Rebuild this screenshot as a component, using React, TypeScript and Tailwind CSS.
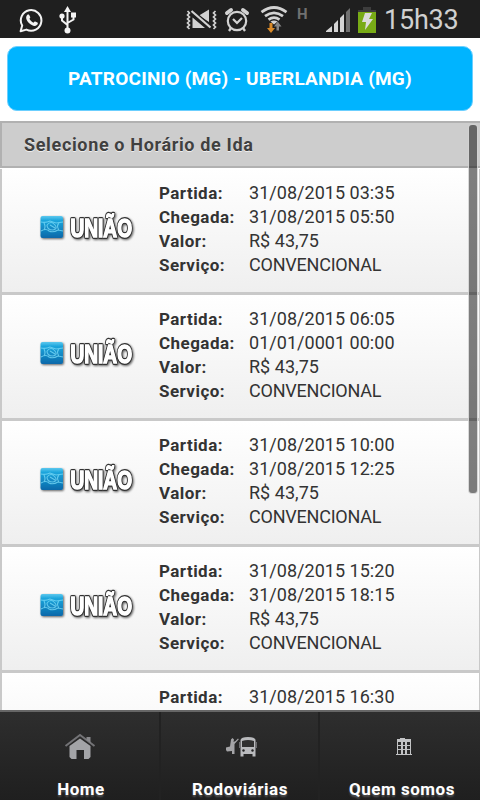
import React from "react";

type Trip = { partida: string; chegada: string };

const trips: Trip[] = [
  { partida: "31/08/2015 03:35", chegada: "31/08/2015 05:50" },
  { partida: "31/08/2015 06:05", chegada: "01/01/0001 00:00" },
  { partida: "31/08/2015 10:00", chegada: "31/08/2015 12:25" },
  { partida: "31/08/2015 15:20", chegada: "31/08/2015 18:15" },
];

function WhatsAppIcon() {
  return (
    <svg className="ml-[19px] shrink-0" width="25" height="25" viewBox="0 0 25 25" fill="none">
      <path d="M1.6 23.2 3.2 17.6A10.3 10.3 0 1 1 7.4 21.6Z" stroke="#f2f2f2" strokeWidth="2" strokeLinejoin="round" />
      <path d="M8.8 6.6c.5-.3 1.1-.2 1.4.3l1 2.1c.2.5 0 .9-.8 1.8.9 1.9 2.3 3.1 4.1 3.9.8-1 1.2-1.4 1.7-1.2l2.2 1.1c.6.3.5.9.3 1.5-.5 1.2-1.8 1.9-3 1.8-4-.4-7.7-4-8.5-7.7-.2-1.4.6-3 1.6-3.6Z" fill="#f2f2f2" />
    </svg>
  );
}

function UsbIcon() {
  return (
    <svg className="ml-[15px] shrink-0" width="18" height="28" viewBox="0 0 18 28" fill="none" stroke="#f4f4f4" strokeWidth="2">
      <path d="M8.5 5V24M3 11v3.5l5.5 4.5M14.500 9v4.500L8.500 17" />
      <path d="M8.5 0 12 6H5Z" fill="#f4f4f4" stroke="none" />
      <circle cx="8.5" cy="24.5" r="3" fill="#f4f4f4" stroke="none" />
      <circle cx="3" cy="10" r="2.6" fill="#f4f4f4" stroke="none" />
      <path d="M12 6.5h5v5h-5Z" fill="#f4f4f4" stroke="none" />
    </svg>
  );
}

function MuteIcon() {
  return (
    <svg className="ml-[108px] shrink-0" width="33" height="24" viewBox="0 0 33 24" fill="none">
      <path d="M2.5 3l2 2-2 2 2 2-2 2 2 2-2 2 2 2-2 2 2 2" stroke="#d2d2d2" strokeWidth="1.7" />
      <path d="M30.5 3l-2 2 2 2-2 2 2 2-2 2 2 2-2 2 2 2-2 2" stroke="#d2d2d2" strokeWidth="1.7" />
      <path d="M24 1.500V14L14 7.500ZM7.500 9.500 20 20H7.500Z" fill="#d2d2d2" />
      <path d="M6.500 3 25.500 19.500" stroke="#1f1f1f" strokeWidth="4.400" />
      <path d="M6.500 3 25.500 19.500" stroke="#d2d2d2" strokeWidth="2.200" />
    </svg>
  );
}

function AlarmIcon() {
  return (
    <svg className="ml-[6px] shrink-0" width="26" height="26" viewBox="0 0 26 26" fill="none" stroke="#d2d2d2">
      <circle cx="13" cy="14" r="9.2" strokeWidth="2.2" />
      <path d="M3 6 7 3M19 3l4 3" strokeWidth="4" strokeLinecap="round" />
      <path d="m7 21-2 3M19 21l2 3" strokeWidth="2.3" />
      <path d="m9 12 4 4 5-5" strokeWidth="2.2" />
    </svg>
  );
}

function WifiIcon() {
  return (
    <svg className="ml-[10px] shrink-0" width="28" height="28" viewBox="0 0 28 28" fill="none" stroke="#d2d2d2" strokeWidth="2.7">
      <path d="M1.5 6.2Q14-3.2 26.5 6.2M5 10.2Q14 3.5 23 10.2M8.5 13.6Q14 9.6 19.5 13.6" />
      <path d="m10.500 15.500q3.500-2 7 0L14 18.500Z" fill="#d2d2d2" stroke="none" />
      <path d="M9.500 17h3v5h2.500L11 27 7 22h2.500Z" fill="#d98a28" stroke="none" />
      <path d="M16.500 24.500v-4H14l3.700-5 3.800 5H19v4Z" fill="#858585" stroke="none" />
    </svg>
  );
}

function SignalIcon() {
  return (
    <svg className="ml-[17px] shrink-0" width="26" height="26" viewBox="0 0 26 26">
      <path d="M1 25v-1l6-5v6ZM9 25v-8l4-4v12ZM15 25V11l4-4v18Z" fill="#d4d4d4" />
      <path d="M21 25V5l4-4v24Z" fill="#707070" />
    </svg>
  );
}

function BatteryIcon() {
  return (
    <svg className="ml-[7px] shrink-0" width="18" height="26" viewBox="0 0 18 26">
      <path d="M5 0h8v3h5v3H0V3h5Z" fill="#3d3d3d" />
      <path d="M0 5h18v21H0Z" fill="#78ab16" />
      <path d="M7 6h7l-3 6h4L7 23l1-8H4Z" fill="#dcdcdc" />
    </svg>
  );
}

function StatusBar() {
  return (
    <header className="flex h-[38px] shrink-0 items-center bg-[#1f1f1f] pt-[2px]">
      <WhatsAppIcon />
      <UsbIcon />
      <MuteIcon />
      <AlarmIcon />
      <WifiIcon />
      <span className="mb-[13px] ml-[9px] w-[11px] text-[15px] leading-[18px] font-bold text-[#707070]">H</span>
      <SignalIcon />
      <BatteryIcon />
      <span className="ml-[8px] text-[27px] leading-[36px] tracking-[-0.2px] whitespace-nowrap text-[#d0d0d0]">15h33</span>
    </header>
  );
}

function UniaoLogo() {
  return (
    <svg className="ml-[37px] shrink-0 overflow-visible" width="98" height="36" viewBox="0 0 98 36">
      <defs>
        <linearGradient id="tile" x1="0" y1="0" x2="0" y2="1">
          <stop offset="0" stopColor="#5cc8ee" />
          <stop offset=".2" stopColor="#1ba5dc" />
          <stop offset="1" stopColor="#0968a9" />
        </linearGradient>
        <filter id="soft" x="-10%" y="-10%" width="120%" height="130%">
          <feDropShadow dx="1" dy="1" stdDeviation=".8" floodColor="#000" floodOpacity=".6" />
        </filter>
      </defs>
      <rect x="1.5" y="7" width="22.500" height="22" rx="2" fill="url(#tile)" filter="url(#soft)" />
      <path d="M2 13q5 1 9-1l6 2 7-1M2 22q5-3 8 0 4 2 9-1l5 1M5 14q2 4 0 7M20 14q-3 3 0 7M8 16q4-5 8 0 3 4-2 5-6 0-6-5M11 16l5 3" fill="none" stroke="#7edcf8" strokeWidth="1.1" opacity=".75" />
      <g filter="url(#soft)">
        <text
          x="31.5"
          y="27.5"
          fontSize="26"
          textLength="61.5"
          lengthAdjust="spacingAndGlyphs"
          fill="#fff"
          stroke="#333"
          strokeWidth="4"
          strokeLinejoin="round"
          paintOrder="stroke"
          className="font-['Liberation_Sans'] font-bold"
        >
          UNIÃO
        </text>
        <text
          x="31.5"
          y="27.5"
          fontSize="26"
          textLength="61.5"
          lengthAdjust="spacingAndGlyphs"
          fill="#fff"
          stroke="#fff"
          strokeWidth="1.5"
          aria-hidden="true"
          className="font-['Liberation_Sans'] font-bold"
        >
          UNIÃO
        </text>
      </g>
    </svg>
  );
}

function Field({ label, value, tight }: { label: string; value: string; tight?: boolean }) {
  return (
    <>
      <dt className="text-[17px] font-bold tracking-[0.45px] whitespace-nowrap">{label}</dt>
      <dd className={`text-[18px] whitespace-nowrap ${tight ? "tracking-[-0.22px]" : "tracking-[0.03px]"}`}>{value}</dd>
    </>
  );
}

const rowFrame = "flex shrink-0 border-r border-l-2 border-x-[#c9c9c9] bg-linear-to-b";
const fieldGrid = "grid auto-rows-[24px] grid-cols-[90px_1fr] content-start pt-[12px] leading-[24px] text-[#333]";

function TripRow({ trip }: { trip: Trip }) {
  return (
    <li className={`${rowFrame} h-[126px] border-b-[3px] border-b-[#c9c9c9] from-white to-[#efefef]`}>
      <div className="w-[157px] shrink-0 pt-[40px]">
        <UniaoLogo />
      </div>
      <dl className={fieldGrid}>
        <Field label="Partida:" value={trip.partida} />
        <Field label="Chegada:" value={trip.chegada} />
        <Field label="Valor:" value="R$ 43,75" />
        <Field label="Serviço:" value="CONVENCIONAL" tight />
      </dl>
    </li>
  );
}

function HomeIcon() {
  return (
    <svg className="-ml-[2px]" width="32" height="28" viewBox="0 0 32 28" fill="none">
      <path d="M1.5 13 16 2l14.500 11" stroke="#737376" strokeWidth="2" />
      <path d="M22.500 4h4v6l-4-3Z" fill="#88888b" />
      <path d="M5.500 13 16 5.500 26.500 13v11l-2 2H20v-9h-7.500v9h-5l-2-2Z" fill="#a3a4a7" />
    </svg>
  );
}

function BusIcon() {
  return (
    <svg className="ml-px" width="32" height="24" viewBox="0 0 32 24" fill="none">
      <path d="M6 4.500 7.500 3 9 4.500 8.500 7l2-1L13 3.500l.8.800L9.500 9v10H7v-3l-5 .5-1-1.500v-2.500l4-1Z" fill="#a4a4a7" />
      <path d="M15.500 21.500V5Q16 2 23 2t7.500 3v16.500h-3V19h-9v2.500Z" fill="#b9babd" />
      <path d="M17 6q6-2 12 0v6H17Z" fill="#303030" />
      <path d="M14.500 7v6M31.500 7v6" stroke="#6d6d70" />
      <circle cx="18.500" cy="15.500" r="1.200" fill="#222" />
      <circle cx="27.500" cy="15.500" r="1.200" fill="#222" />
    </svg>
  );
}

function BuildingIcon() {
  return (
    <svg className="ml-[3px]" width="18" height="20" viewBox="0 0 18 20">
      <path d="M5 1h5v1h6v15h1v1H1v-1h1V2h3Z" fill="#c2c3c5" />
      <path d="M3 5h3v3H3ZM8 5h2v3H8ZM12 5h3v3h-3ZM3 9h3v3H3ZM8 9h2v3H8ZM12 9h3v3h-3ZM3 13h3v4H3ZM8 13h2v4H8ZM12 13h3v4h-3Z" fill="#2a2a2a" />
    </svg>
  );
}

function NavItem({ icon, label, className }: { icon: React.ReactNode; label: string; className: string }) {
  return (
    <button className={`flex flex-col items-center ${className}`}>
      <span className="flex h-[67px] items-center pt-[3px]">{icon}</span>
      <span className="text-[17px] leading-[20px] font-bold tracking-[0.5px] whitespace-nowrap text-white [text-shadow:0_2px_2px_#555]">{label}</span>
    </button>
  );
}

export default function App() {
  return (
    <div className="relative flex h-[800px] w-[480px] flex-col bg-white font-['Roboto',sans-serif]">
      <StatusBar />
      <div className="h-[83px] shrink-0 px-[7px] pt-2">
        <h1 className="flex h-[65px] items-center justify-center rounded-[10px] border border-[#6bcfff] bg-[#00b4ff] pt-[2px] text-[19px] font-bold tracking-[0.22px] whitespace-nowrap text-white">
          PATROCINIO (MG) - UBERLANDIA (MG)
        </h1>
      </div>
      <main className="flex min-h-0 flex-1 flex-col">
        <h2 className="mb-px flex h-[47px] shrink-0 items-center border-2 border-r-0 border-[#b1b1b1] bg-[#cdcdcd] pl-[22px] text-[18px] font-bold tracking-[0.65px] text-[#404040] [text-shadow:0_1px_0_#eee]">
          Selecione o Horário de Ida
        </h2>
        <ul className="flex flex-1 flex-col">
          {trips.map((trip) => (
            <TripRow key={trip.partida} trip={trip} />
          ))}
          <li className={`${rowFrame} h-[37px] from-white to-[#fafafa] pl-[157px]`}>
            <dl className={fieldGrid}>
              <Field label="Partida:" value="31/08/2015 16:30" />
            </dl>
          </li>
        </ul>
      </main>
      <nav className="grid h-[90px] shrink-0 grid-cols-[161px_159px_160px] border-t-2 border-[#666] bg-linear-to-b from-[#2e2e2e] to-[#1f1f1f]">
        <NavItem icon={<HomeIcon />} label="Home" className="border-r-2 border-[#222] pl-[3px]" />
        <NavItem icon={<BusIcon />} label="Rodoviárias" className="border-r-2 border-[#222] pl-px" />
        <NavItem icon={<BuildingIcon />} label="Quem somos" className="pl-[4px]" />
      </nav>
      <div className="absolute top-[124px] left-[468px] h-[370px] w-[10px] rounded-[4px] border border-white/70 bg-black/50" />
    </div>
  );
}
